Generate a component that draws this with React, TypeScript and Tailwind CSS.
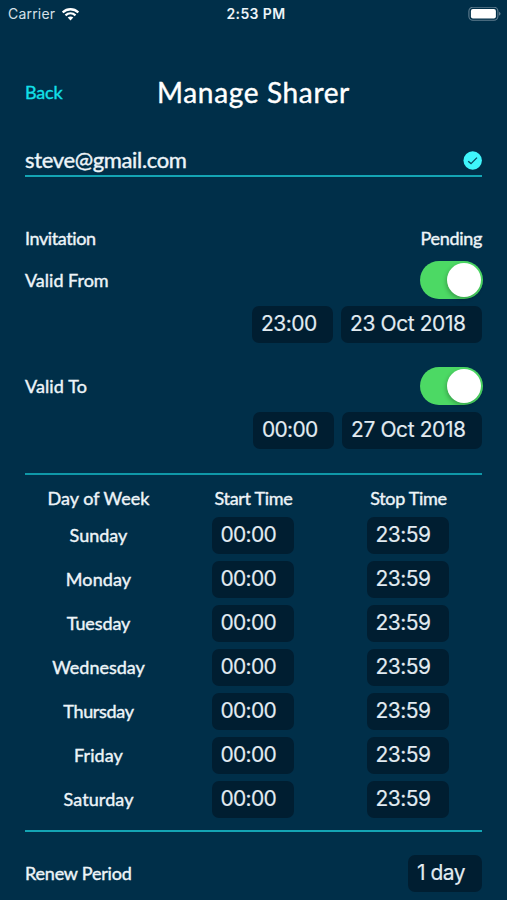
import clsx from 'clsx'

const DAYS = [
  { name: 'Sunday', tracking: 'tracking-[0px]' },
  { name: 'Monday', tracking: 'tracking-[0.1px]' },
  { name: 'Tuesday', tracking: 'tracking-[-0.1px]' },
  { name: 'Wednesday', tracking: 'tracking-[0px]' },
  { name: 'Thursday', tracking: 'tracking-[-0.3px]' },
  { name: 'Friday', tracking: 'tracking-[0.1px]' },
  { name: 'Saturday', tracking: 'tracking-[0.1px]' },
]

function WifiIcon() {
  return (
    <svg className="ml-[7px] h-[13px] w-[17px]" viewBox="0 0 17 13" fill="none" stroke="#fff">
      <path d="M0.7 4.4C5.1 0.2 11.9 0.2 16.3 4.4" strokeWidth="2.3" />
      <path d="M3.5 7.4C6.4 4.7 10.6 4.7 13.5 7.4" strokeWidth="2.2" />
      <path d="M5.7 9.6C7.3 8.1 9.7 8.1 11.3 9.6L8.5 12.4Z" fill="#fff" stroke="none" />
    </svg>
  )
}

function BatteryIcon() {
  return (
    <svg className="h-[15px] w-[33px]" viewBox="0 0 33 15">
      <rect x="0.9" y="0.2" width="29" height="13" rx="4" fill="none" stroke="#5f7d8f" strokeWidth="1.1" />
      <rect x="2.9" y="2" width="25" height="9.4" rx="2" fill="#fff" />
      <path d="M31 4.8Q32.6 5.6 32.6 6.8T31 8.8Z" fill="#5f7d8f" />
    </svg>
  )
}

function CheckBadge() {
  return (
    <svg className="mt-[3px] h-[19px] w-[19px]" viewBox="0 0 19 19">
      <circle cx="9.7" cy="9.5" r="9.2" fill="#3ff5fc" />
      <path d="M5.2 10.2L8 12.6L14 6.6" fill="none" stroke="#07475d" strokeWidth="1.3" />
    </svg>
  )
}

function Toggle() {
  return (
    <button className="flex h-[38px] w-[63px] items-center justify-end rounded-full bg-[#4cd964] pr-[2px]">
      <span className="h-[34px] w-[34px] rounded-full bg-white shadow-[-1px_2px_4px_rgba(0,0,0,0.25)]" />
    </button>
  )
}

function Field({ value, className }: { value: string; className?: string }) {
  return (
    <div
      className={clsx(
        'flex h-[37px] items-center whitespace-nowrap rounded-[7px] bg-[#001e31] pb-px pl-[9px] font-[Inter,sans-serif] text-[21px] font-normal text-[#e2ebf1] [-webkit-text-stroke:0.15px]',
        className,
      )}
    >
      {value}
    </div>
  )
}

export default function App() {
  return (
    <div className="h-[900px] w-[507px] overflow-hidden bg-[#002f49] font-[Lato,sans-serif] text-[18px] font-normal leading-6 tracking-[-0.2px] text-[#edf4f8] [-webkit-text-stroke:0.4px]">
      <header className="grid h-[28px] grid-cols-3 items-center pl-[8px] pr-[6px] font-[Inter,sans-serif] text-[14px] [-webkit-text-stroke:0px]">
        <div className="flex items-center font-normal text-[#d5e0e8]">
          <span className="tracking-[0.2px]">Carrier</span>
          <WifiIcon />
        </div>
        <span className="pl-[3px] text-center text-[14px] font-semibold tracking-[0.4px]">2:53 PM</span>
        <div className="flex justify-end">
          <BatteryIcon />
        </div>
      </header>

      <main className="px-[25px]">
        <div className="mt-[39px] grid h-[50px] grid-cols-[100px_257px_100px] items-center">
          <button className="text-left text-[#12dfe6]">Back</button>
          <h1 className="text-center text-[28px] tracking-[0.65px] text-white">Manage Sharer</h1>
        </div>

        <div className="mt-[25px] flex h-[35px] items-center justify-between border-b-2 border-[#14a5b4]">
          <span className="pt-[2px] text-[22px] tracking-[-0.35px]">steve@gmail.com</span>
          <CheckBadge />
        </div>

        <section className="mt-[49px]">
          <div className="flex h-[24px] items-center justify-between">
            <span className="tracking-[-0.4px]">Invitation</span>
            <span className="tracking-[-0.3px]">Pending</span>
          </div>
          <div className="-mr-px mt-[11px] flex h-[38px] items-center justify-between">
            <span className="tracking-[0px]">Valid From</span>
            <Toggle />
          </div>
          <div className="mt-[7px] flex justify-end gap-[8px]">
            <Field value="23:00" className="w-[81px] tracking-[-0.5px]" />
            <Field value="23 Oct 2018" className="w-[141px] tracking-[-0.4px]" />
          </div>
          <div className="-mr-px mt-[24px] flex h-[38px] items-center justify-between">
            <span className="tracking-[0.1px]">Valid To</span>
            <Toggle />
          </div>
          <div className="mt-[7px] flex justify-end gap-[8px]">
            <Field value="00:00" className="w-[81px] tracking-[-0.7px]" />
            <Field value="27 Oct 2018" className="w-[140px] tracking-[-0.4px]" />
          </div>
        </section>

        <section className="mt-[24px] border-b-2 border-b-[#14a5b4] border-t-2 border-t-[#0f98a8] pb-[12px]">
          <div className="grid grid-cols-[147px_163px_147px] pt-[11px] text-center">
            <span className="tracking-[0px]">Day of Week</span>
            <span className="tracking-[-0.3px]">Start Time</span>
            <span className="tracking-[-0.3px]">Stop Time</span>
          </div>
          <div className="mt-[7px] flex flex-col gap-[7px]">
            {DAYS.map((day) => (
              <div key={day.name} className="grid grid-cols-[147px_161px_149px] items-center justify-items-center">
                <span className={clsx('pb-[2px]', day.tracking)}>{day.name}</span>
                <Field value="00:00" className="w-[82px] tracking-[-0.7px]" />
                <Field value="23:59" className="w-[82px] tracking-[-0.5px]" />
              </div>
            ))}
          </div>
        </section>

        <div className="mt-[23px] flex items-center justify-between">
          <span className="pb-[2px]">Renew Period</span>
          <Field value="1 day" className="w-[74px] tracking-[-0.5px]" />
        </div>
      </main>
    </div>
  )
}
